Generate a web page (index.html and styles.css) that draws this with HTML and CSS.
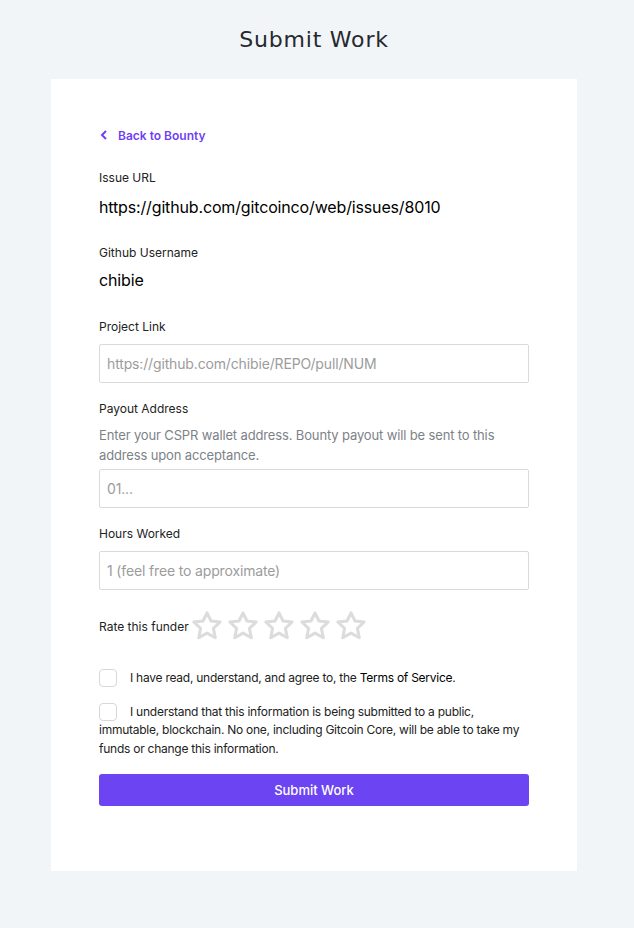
FILE: index.html
```html
<!DOCTYPE html>
<html>
<head>
<meta charset="utf-8">
<link rel="stylesheet" href="styles.css">
</head>
<body>
<h1 class="title">Submit Work</h1>
<main class="card">
  <a class="back" href="#"><svg class="chev" width="8" height="10" viewBox="0 0 8 10"><path d="M6 1 L2 5 L6 9" fill="none" stroke="#6f3ff5" stroke-width="2"/></svg>Back to Bounty</a>

  <div class="field">
    <div class="label">Issue URL</div>
    <div class="value value-url">https://github.com/gitcoinco/web/issues/8010</div>
  </div>

  <div class="field">
    <div class="label">Github Username</div>
    <div class="value value-user">chibie</div>
  </div>

  <div class="field">
    <div class="label">Project Link</div>
    <input class="input" type="text" placeholder="https://github.com/chibie/REPO/pull/NUM">
  </div>

  <div class="field after-input">
    <div class="label">Payout Address</div>
    <p class="help">Enter your CSPR wallet address. Bounty payout will be sent to this address upon acceptance.</p>
    <input class="input" type="text" placeholder="01...">
  </div>

  <div class="field after-input">
    <div class="label">Hours Worked</div>
    <input class="input" type="text" placeholder="1 (feel free to approximate)">
  </div>

  <div class="rate">
    <span class="rate-label">Rate this funder</span>
    <div class="stars">
      <svg class="star" viewBox="0 0 30 30"><path d="M15 1.8 L19 10 L28.2 11 L21.4 17.4 L23.3 26.8 L15 22.1 L6.7 26.8 L8.6 17.4 L1.8 11 L11 10 Z" fill="none" stroke="#dcdcdc" stroke-width="3" stroke-linejoin="round"/></svg>
      <svg class="star" viewBox="0 0 30 30"><path d="M15 1.8 L19 10 L28.2 11 L21.4 17.4 L23.3 26.8 L15 22.1 L6.7 26.8 L8.6 17.4 L1.8 11 L11 10 Z" fill="none" stroke="#dcdcdc" stroke-width="3" stroke-linejoin="round"/></svg>
      <svg class="star" viewBox="0 0 30 30"><path d="M15 1.8 L19 10 L28.2 11 L21.4 17.4 L23.3 26.8 L15 22.1 L6.7 26.8 L8.6 17.4 L1.8 11 L11 10 Z" fill="none" stroke="#dcdcdc" stroke-width="3" stroke-linejoin="round"/></svg>
      <svg class="star" viewBox="0 0 30 30"><path d="M15 1.8 L19 10 L28.2 11 L21.4 17.4 L23.3 26.8 L15 22.1 L6.7 26.8 L8.6 17.4 L1.8 11 L11 10 Z" fill="none" stroke="#dcdcdc" stroke-width="3" stroke-linejoin="round"/></svg>
      <svg class="star" viewBox="0 0 30 30"><path d="M15 1.8 L19 10 L28.2 11 L21.4 17.4 L23.3 26.8 L15 22.1 L6.7 26.8 L8.6 17.4 L1.8 11 L11 10 Z" fill="none" stroke="#dcdcdc" stroke-width="3" stroke-linejoin="round"/></svg>
    </div>
  </div>

  <div class="check">
    <span class="box"></span>I have read, understand, and agree to, the <a class="tos" href="#">Terms of Service</a>.
  </div>
  <div class="check check2">
    <span class="box"></span>I understand that this information is being submitted to a public, immutable, blockchain. No one, including Gitcoin Core, will be able to take my funds or change this information.
  </div>

  <button class="submit">Submit Work</button>
</main>
</body>
</html>
```

FILE: styles.css
```css
* { box-sizing: border-box; }
html, body { margin: 0; padding: 0; }
body {
  background: #f2f5f8;
  font-family: Inter, "Liberation Sans", sans-serif;
  color: #222;
  padding: 0 57px 57px 51px;
}
.title {
  margin: 0;
  padding-top: 24px;
  height: 79px;
  text-align: center;
  font-family: "DejaVu Sans", sans-serif;
  font-weight: normal;
  font-size: 22px;
  letter-spacing: 0.8px;
  color: #25292e;
  line-height: 32px;
}
.card {
  background: #fff;
  padding: 48px 48px 65px 48px;
  width: 526px;
}
.back {
  display: flex;
  align-items: center;
  gap: 10px;
  color: #6f3ff5;
  font-size: 12px;
  font-weight: 600;
  text-decoration: none;
  height: 16px;
  margin-left: 1px;
}
.field { margin-top: 27px; }
.field.after-input { margin-top: 18px; }
.label {
  font-size: 12px;
  color: #222;
  line-height: 16px;
}
.value {
  font-size: 16px;
  letter-spacing: -0.15px;
  color: #000;
  line-height: 20px;
}
.value-url { margin-top: 11px; margin-bottom: 28px; }
.value-user { margin-top: 9px; margin-bottom: 29px; }
.input {
  display: block;
  width: 100%;
  height: 39px;
  margin-top: 9px;
  border: 1px solid #dadada;
  border-radius: 2px;
  padding: 0 7px;
  font-family: Inter, "Liberation Sans", sans-serif;
  font-size: 14px;
  letter-spacing: -0.15px;
  color: #222;
  outline: none;
}
.input::placeholder { color: #9c9c9c; }
.help {
  margin: 8px 0 0 0;
  font-size: 13px;
  letter-spacing: -0.14px;
  line-height: 20px;
  color: #7d8287;
}
.help + .input { margin-top: 4px; }
.rate {
  display: flex;
  align-items: center;
  gap: 3px;
  margin-top: 21px;
}
.rate-label { font-size: 12px; color: #222; }
.stars { display: flex; gap: 6px; }
.star { width: 30px; height: 30px; display: block; }
.check {
  font-size: 12px;
  letter-spacing: -0.25px;
  line-height: 18.5px;
  color: #222;
  margin-top: 28px;
}
.check2 { margin-top: 15px; }
.box {
  display: inline-block;
  width: 18px;
  height: 18px;
  border: 1px solid #d8d8d8;
  border-radius: 4px;
  vertical-align: -5px;
  margin-right: 13px;
}
.tos { color: #000; text-decoration: none; }
.submit {
  display: block;
  width: 100%;
  height: 32px;
  margin-top: 16px;
  background: #6c44f2;
  color: #fff;
  border: none;
  border-radius: 3px;
  font-family: Inter, "Liberation Sans", sans-serif;
  font-size: 13px;
  font-weight: 500;
}
```
